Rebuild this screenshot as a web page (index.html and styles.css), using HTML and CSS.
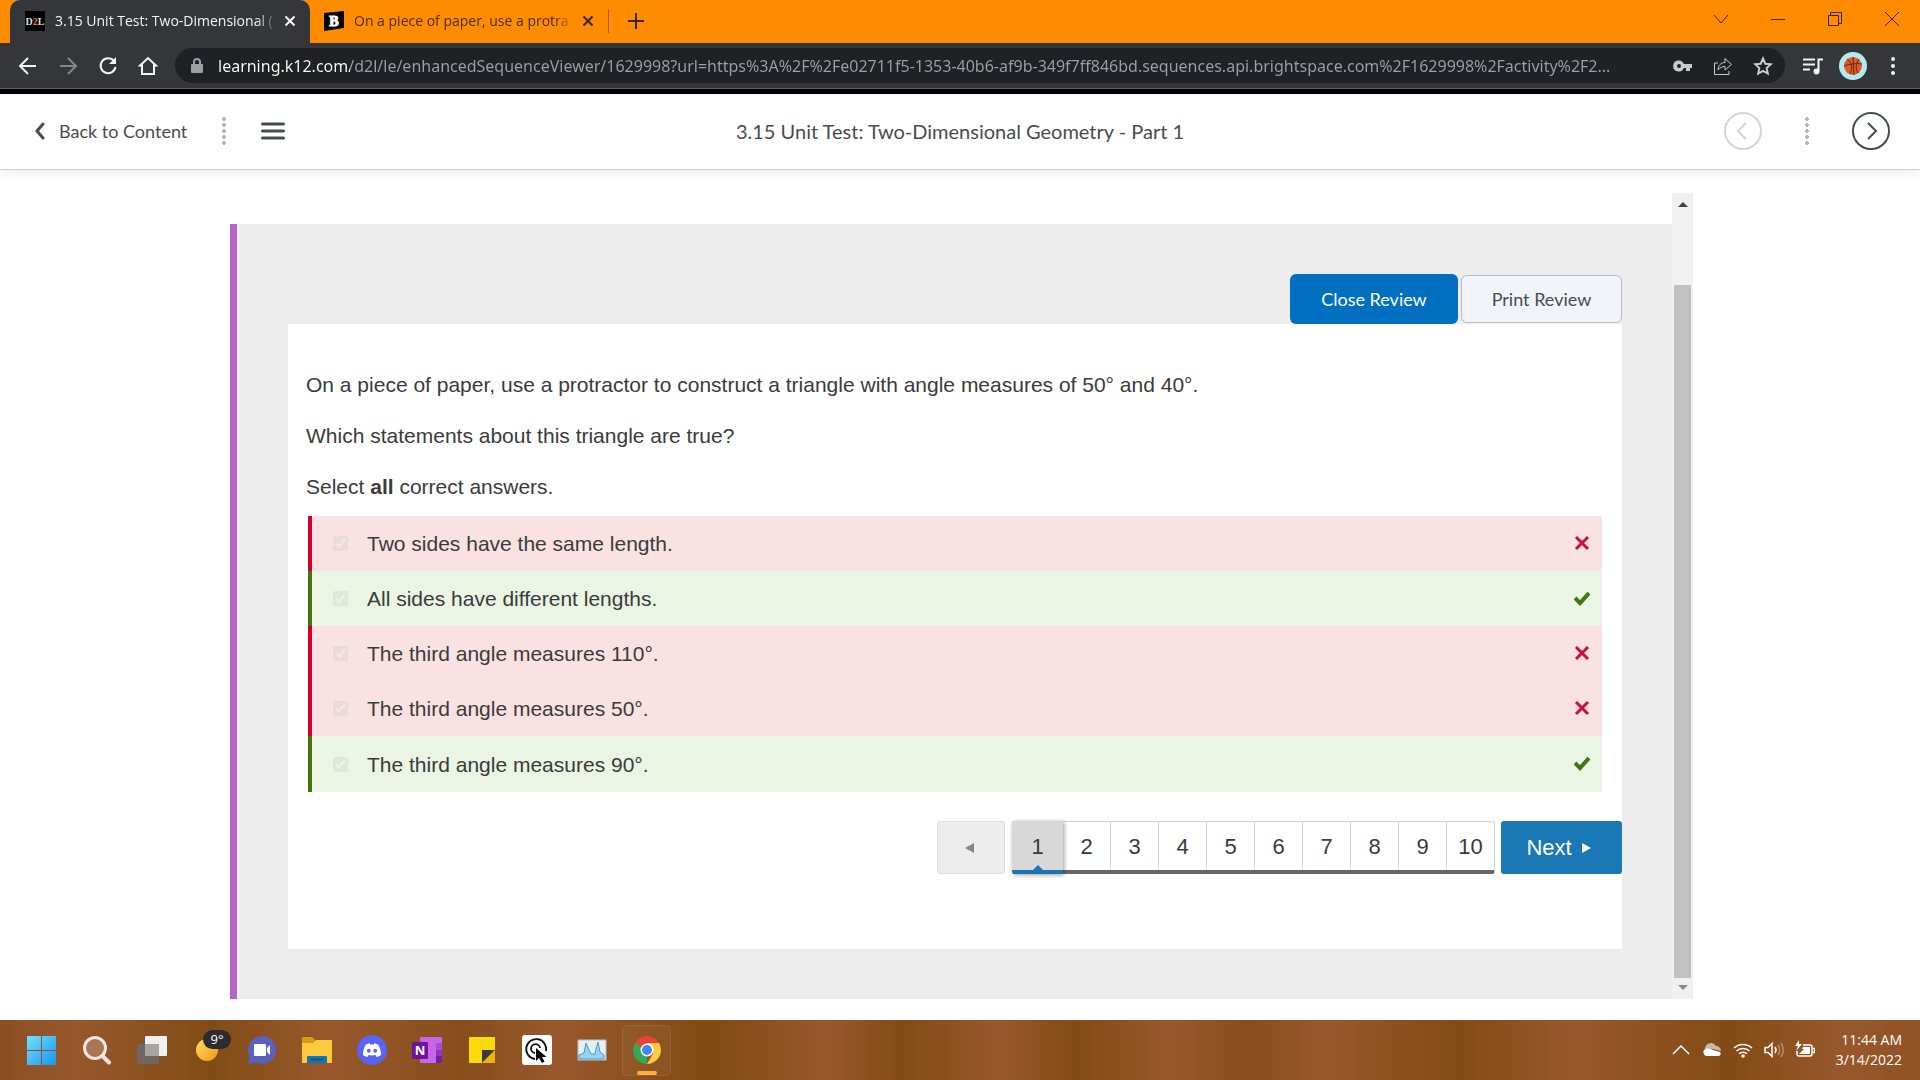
FILE: index.html
```html
<!DOCTYPE html>
<html lang="en">
<head>
    <meta charset="UTF-8">
    <title>3.15 Unit Test: Two-Dimensional Geometry - Part 1</title>
    <link rel="stylesheet" href="styles.css">
</head>
<body>
<div id="tabs">
    <div class="tab active">
        <svg class="favicon" viewBox="0 0 20 20"><rect width="20" height="20" fill="#000"/><text x="10" y="14" text-anchor="middle" font-family="Liberation Serif, serif" font-weight="bold" font-size="10" fill="#ddd">D<tspan fill="#e08050">2</tspan>L</text></svg>
        <span class="tab-title">3.15 Unit Test: Two-Dimensional (</span>
        <button class="tab-close" aria-label="Close tab"><svg viewBox="0 0 12 12"><path d="M1.500 1.500l9 9M10.500 1.500l-9 9"/></svg></button>
    </div>
    <div class="tab">
        <svg class="favicon" viewBox="0 0 20 20"><path d="M0 2L20 0V17L0 20z" fill="#000"/><text x="10" y="15" text-anchor="middle" font-family="Liberation Serif, serif" font-weight="bold" font-size="14" fill="#fff" stroke="#fff">B</text></svg>
        <span class="tab-title">On a piece of paper, use a protra</span>
        <button class="tab-close" aria-label="Close tab"><svg viewBox="0 0 12 12"><path d="M1.500 1.500l9 9M10.500 1.500l-9 9"/></svg></button>
    </div>
    <button class="new-tab" aria-label="New tab"><svg viewBox="0 0 16 16"><path d="M8 0v16M0 8h16"/></svg></button>
    <div class="window-buttons">
        <button aria-label="Search tabs"><svg viewBox="0 0 14 14"><path d="M0 3l7 8 7-8"/></svg></button>
        <button aria-label="Minimize"><svg viewBox="0 0 14 14"><path d="M0 7.500h14"/></svg></button>
        <button aria-label="Restore"><svg viewBox="0 0 14 14"><path d="M.5 3.500h10v10H.5zM2.500 3V.5h11v11H11"/></svg></button>
        <button aria-label="Close"><svg viewBox="0 0 14 14"><path d="M0 0l14 14M14 0L0 14"/></svg></button>
    </div>
</div>

<div id="toolbar">
    <button aria-label="Back"><svg viewBox="0 0 20 20"><path d="M18 10H3M10 2l-8 8 8 8"/></svg></button>
    <button class="off" aria-label="Forward" disabled><svg viewBox="0 0 20 20"><path d="M2 10h15M10 2l8 8-8 8"/></svg></button>
    <button aria-label="Reload"><svg viewBox="0 0 20 20"><path d="M16 5A7.500 7.500 0 1 0 17.500 11"/><path d="M18 1v7h-7z" fill="#f1f3f4" stroke="none"/></svg></button>
    <button aria-label="Home"><svg viewBox="0 0 20 20"><path d="M4 18V9.500H2L10 2l8 7.500h-2V18z"/></svg></button>
    <div class="omnibox">
        <svg class="lock" viewBox="0 0 12 16"><path d="M3 7V4a3 3 0 0 1 6 0v3" fill="none" stroke="#9aa0a6" stroke-width="2"/><rect y="6" width="12" height="9" rx="1" fill="#9aa0a6"/></svg>
        <input type="text" aria-label="Address" value="learning.k12.com/d2l/le/enhancedSequenceViewer/1629998?url=https%3A%2F%2Fe02711f5-1353-40b6-af9b-349f7ff846bd.sequences.api.brightspace.com%2F1629998%2Factivity%2F2...">
        <button aria-label="Passwords"><svg viewBox="0 0 20 20"><path fill="#c8cacd" stroke="none" fill-rule="evenodd" d="M6 4.500a5.500 5.500 0 1 0 4.800 7.500H13v3h4v-3h2V8h-8.200A5.500 5.500 0 0 0 6 4.500zM6 8a2 2 0 1 1 0 4 2 2 0 0 1 0-4z"/></svg></button>
        <button class="thin" aria-label="Share"><svg viewBox="0 0 20 20"><path d="M5 7H1.500v11.500H16V15M5 14c.5-5 3-7.500 7-7.500V2.500L18.500 8.500 12 14v-3.500c-3 0-5 1-7 3.500z"/></svg></button>
        <button aria-label="Bookmark"><svg viewBox="0 0 20 20"><path d="M10 2.500l2.300 5.200 5.500.6-4.100 3.800 1.100 5.500L10 14.900l-4.800 2.700 1.100-5.500-4.100-3.800 5.500-.6z"/></svg></button>
    </div>
    <button class="media" aria-label="Media"><svg viewBox="0 0 20 20"><path d="M0 3.500h12M0 8.500h12M0 13.500h7M15.500 15V3.500H20"/><circle cx="13.500" cy="15.500" r="3" fill="#f1f3f4" stroke="none"/></svg></button>
    <button class="avatar" aria-label="Profile"><svg viewBox="0 0 28 28"><circle cx="14" cy="14" r="14" fill="#b2ebf2" stroke="none"/><circle cx="14" cy="14" r="9" fill="#e65a22" stroke="none"/><path d="M14 5l1 18M5 14c5-2 13-3 18-2M8 7c5 3 6 9 3 15M20 7c-3 4-4 9-1 14" fill="none" stroke="#5b2a1a" stroke-width="1"/></svg></button>
    <button class="kebab" aria-label="Menu"><svg viewBox="0 0 20 20"><g fill="#f1f3f4" stroke="none"><circle cx="10" cy="3" r="2"/><circle cx="10" cy="10" r="2"/><circle cx="10" cy="17" r="2"/></g></svg></button>
</div>

<header id="viewer-header">
    <div class="side">
        <a class="back" href="#"><svg viewBox="0 0 11 18"><path d="M9 2L3 9l6 7"/></svg>Back to Content</a>
        <span class="dots"></span>
        <button class="burger" aria-label="Contents"><svg viewBox="0 0 24 18"><path d="M1.500 2h21M1.500 9h21M1.500 16h21"/></svg></button>
    </div>
    <h1>3.15 Unit Test: Two-Dimensional Geometry - Part 1</h1>
    <div class="side right">
        <button class="round" aria-label="Previous" disabled><svg viewBox="0 0 38 38"><circle cx="19" cy="19" r="18"/><path d="M22 11l-8 8 8 8"/></svg></button>
        <span class="dots"></span>
        <button class="round" aria-label="Next activity"><svg viewBox="0 0 38 38"><circle cx="19" cy="19" r="18"/><path d="M16 11l8 8-8 8"/></svg></button>
    </div>
</header>

<main>
    <div class="frame">
        <div class="review-buttons">
            <button class="close-review">Close Review</button>
            <button class="print-review">Print Review</button>
        </div>
        <div class="question">
            <div class="prompt">
                <p>On a piece of paper, use a protractor to construct a triangle with angle measures of 50° and 40°.</p>
                <p>Which statements about this triangle are true?</p>
                <p>Select <b>all</b> correct answers.</p>
            </div>
            <ul class="answers">
                <li class="wrong"><input type="checkbox" id="a1" checked disabled><label for="a1">Two sides have the same length.</label><svg viewBox="0 0 16 16"><path d="M2 2l12 12M14 2L2 14"/></svg></li>
                <li class="correct"><input type="checkbox" id="a2" checked disabled><label for="a2">All sides have different lengths.</label><svg viewBox="0 0 16 16"><path d="M1 8l5 5 9-10"/></svg></li>
                <li class="wrong"><input type="checkbox" id="a3" checked disabled><label for="a3">The third angle measures 110°.</label><svg viewBox="0 0 16 16"><path d="M2 2l12 12M14 2L2 14"/></svg></li>
                <li class="wrong"><input type="checkbox" id="a4" checked disabled><label for="a4">The third angle measures 50°.</label><svg viewBox="0 0 16 16"><path d="M2 2l12 12M14 2L2 14"/></svg></li>
                <li class="correct"><input type="checkbox" id="a5" checked disabled><label for="a5">The third angle measures 90°.</label><svg viewBox="0 0 16 16"><path d="M1 8l5 5 9-10"/></svg></li>
            </ul>
            <nav class="pager">
                <button class="prev" aria-label="Previous question" disabled><svg viewBox="0 0 9 10"><path d="M9 0v10L0 5z"/></svg></button>
                <div class="pages">
                    <button class="current">1</button>
                    <button>2</button>
                    <button>3</button>
                    <button>4</button>
                    <button>5</button>
                    <button>6</button>
                    <button>7</button>
                    <button>8</button>
                    <button>9</button>
                    <button>10</button>
                </div>
                <button class="next">Next<svg viewBox="0 0 9 10"><path d="M0 0v10l9-5z"/></svg></button>
            </nav>
        </div>
    </div>
    <div class="scrollbar">
        <svg viewBox="0 0 10 5"><path d="M0 5l5-5 5 5z" fill="#444"/></svg>
        <div class="thumb"></div>
        <svg viewBox="0 0 10 5"><path d="M0 0l5 5 5-5z" fill="#888"/></svg>
    </div>
</main>

<footer id="taskbar">
    <div class="apps">
        <button aria-label="Start"><svg viewBox="0 0 30 30"><defs><linearGradient id="win" x2="1" y2="1"><stop stop-color="#6fe3fc"/><stop offset="1" stop-color="#1a93f0"/></linearGradient></defs><path fill="url(#win)" d="M0 1h14v14H0zM15 1h14v14H15zM0 16h14v14H0zM15 16h14v14H15z"/></svg></button>
        <button aria-label="Search"><svg viewBox="0 0 30 30"><circle cx="13" cy="13" r="10.500" fill="#fff" fill-opacity=".2" stroke="#efe6e0" stroke-width="3"/><path d="M20.500 21l6.500 6.500" stroke="#efe6e0" stroke-width="4" stroke-linecap="round"/></svg></button>
        <button aria-label="Task view"><svg viewBox="0 0 30 30"><rect x="8" y="1" width="22" height="20" rx="1" fill="#f2f0ef"/><rect y="9" width="22" height="20" rx="1" fill="#6a6a6c" fill-opacity=".85"/><path d="M8 9h14v12H8z" fill="#a5a5a5"/></svg></button>
        <button class="weather" aria-label="Weather"><svg viewBox="0 0 40 40"><defs><linearGradient id="sun" x2="1" y2="1"><stop stop-color="#ffdf62"/><stop offset="1" stop-color="#f79412"/></linearGradient></defs><circle cx="13" cy="20" r="11" fill="url(#sun)"/><rect x="9" width="28" height="19" rx="9.500" fill="#2c2c2e"/><text x="23" y="14" text-anchor="middle" font-family="Open Sans, sans-serif" font-size="13" fill="#fff">9°</text></svg></button>
        <button aria-label="Chat"><svg viewBox="0 0 30 30"><path d="M15 1a14 14 0 1 1-6 26.600L1 29l1.500-7.500A14 14 0 0 1 15 1z" fill="#5b5fc0"/><rect x="7" y="9" width="12" height="12" rx="1" fill="#fff"/><path d="M20 13l3-3v10l-3-3z" fill="#fff"/></svg></button>
        <button aria-label="File Explorer"><svg viewBox="0 0 30 30"><path d="M0 3q0-1 1-1h9l3 3v5H0z" fill="#d99b16"/><path d="M0 8h11l3-3h15q1 0 1 1v22H0z" fill="#fccb3d"/><path d="M5 28v-6q0-1 1-1h18q1 0 1 1v6z" fill="#1176b8"/><path d="M9 24.500h12" stroke="#0a4f85" stroke-width="1.500"/></svg></button>
        <button aria-label="Discord"><svg viewBox="0 0 30 30"><circle cx="15" cy="15" r="15" fill="#5865f2"/><path fill="#fff" fill-rule="evenodd" d="M9 9.500l3.500-1.200.8 1.300h3.400l.8-1.300L21 9.500c2 3 3.200 6.500 3 10.500-1.500 1.200-3 1.800-4.300 2l-1.200-1.900c-2.300.6-4.700.6-7 0L10.300 22c-1.300-.2-2.800-.8-4.300-2-.2-4 1-7.500 3-10.500zM11.800 13.700a1.900 2 0 1 0 0 4 1.900 2 0 0 0 0-4zm6.400 0a1.900 2 0 1 0 0 4 1.900 2 0 0 0 0-4z"/></svg></button>
        <button aria-label="OneNote"><svg viewBox="0 0 30 30"><rect x="8" y="2" width="22" height="26" rx="1" fill="#ca64ea"/><path d="M24 8h6v7h-6z" fill="#ae4bd5"/><path d="M24 15h6v6h-6z" fill="#9332bf"/><path d="M24 21h6v7h-6z" fill="#7719aa"/><rect y="7" width="16" height="17" rx="1" fill="#6b14a0"/><text x="8" y="20" text-anchor="middle" font-family="Open Sans, sans-serif" font-weight="bold" font-size="13" fill="#fff">N</text></svg></button>
        <button aria-label="Sticky Notes"><svg viewBox="0 0 30 30"><path d="M2 2h26v13L15 28H2z" fill="#fcd90a"/><path d="M15 15h13L15 28z" fill="#3c3c3c"/><path d="M28 15v13H15z" fill="#f0b400"/></svg></button>
        <button aria-label="Auto Clicker"><svg viewBox="0 0 30 30"><rect width="30" height="30" rx="3" fill="#fff"/><g fill="none" stroke="#111" stroke-width="1.800"><path d="M13 24a10 10 0 1 1 11-8"/><path d="M13 18a4.500 4.500 0 1 1 5-5"/></g><path d="M14 13v13l3-3 3 5 2.500-1.500-2.500-4.500h4.500z" fill="#000"/></svg></button>
        <button aria-label="Resource monitor"><svg viewBox="0 0 30 30"><rect x="1" y="5" width="28" height="20" fill="#e8eef2" stroke="#b8c0c6"/><path d="M2 24v-4l5-2 2-10 3 7 2 4h4l1-5 2-7 2 10 4 3v4z" fill="#9bd2f1" stroke="#3c9ed6"/></svg></button>
        <button class="running" aria-label="Google Chrome"><svg viewBox="0 0 30 30"><path d="M15 15L2.900 8A14 14 0 0 1 27.100 8z" fill="#ea4335"/><path d="M15 15v14A14 14 0 0 1 2.900 8z" fill="#34a853"/><path d="M15 8h12.100a14 14 0 0 1-12.100 21l6-10.500z" fill="#fbcb42"/><circle cx="15" cy="15" r="6.500" fill="#fff"/><circle cx="15" cy="15" r="5" fill="#4285f4"/></svg></button>
    </div>
    <div class="tray">
        <svg viewBox="0 0 20 20"><path d="M2 14l8-8 8 8" fill="none" stroke="#fff" stroke-width="1.500"/></svg>
        <svg viewBox="0 0 20 20"><path d="M3 8a6 6 0 0 1 11-2 5 5 0 0 1 5 5l-8-2-8 4z" fill="#c9b7a8"/><path d="M4 16a4 4 0 0 1-1-7l3-.5 12 3.500a2.500 2.500 0 0 1-1 4z" fill="#fff"/></svg>
        <svg viewBox="0 0 20 20"><g fill="none" stroke="#fff" stroke-width="1.500"><path d="M1 8a13 13 0 0 1 18 0M3.500 11a9.500 9.500 0 0 1 13 0M6 13.700a6 6 0 0 1 8 0"/></g><circle cx="10" cy="16" r="1.800" fill="#fff"/></svg>
        <svg viewBox="0 0 20 20"><g fill="none" stroke="#fff" stroke-width="1.500"><path d="M1 7.500h3L8 3.500v13l-4-4H1zM11 7q2 3 0 6"/><path d="M14 5q3.500 5 0 10M17 3q4.500 7 0 14" stroke-opacity=".35"/></g></svg>
        <svg viewBox="0 0 20 20"><path d="M8 5h7q2 0 2 2v7q0 2-2 2H4q-2 0-2-2v-3M18 8.500h1.500v4H18" fill="none" stroke="#fff" stroke-width="1.500"/><path d="M8 7h7v7H4l5-5H7z" fill="#fff"/><path d="M4 0L0 6h3L1 11l6-7H4z" fill="#fff"/></svg>
        <div class="clock">11:44 AM<br>3/14/2022</div>
    </div>
</footer>
</body>
</html>
```
FILE: styles.css
```css
* {
    margin: 0;
    padding: 0;
    box-sizing: border-box;
}

body {
    min-height: 100vh;
    display: flex;
    flex-direction: column;
    font-family: "Liberation Sans", Arial, sans-serif;
    background: #fff;
}

button {
    border: none;
    background: none;
    font: inherit;
    color: inherit;
    cursor: pointer;
}

svg {
    display: block;
    flex: none;
}

ul {
    list-style: none;
}

/* browser tabs */
#tabs {
    height: 43px;
    display: flex;
    background: #ff8c00;
    padding-left: 10px;
    font-family: "Open Sans", sans-serif;
    font-size: 14px;
}

.tab {
    width: 298px;
    height: 43px;
    display: flex;
    align-items: center;
    padding: 0 8px 2px 14px;
    color: #4a2e08;
}

.tab.active {
    width: 300px;
    padding-left: 15px;
    color: #f1f3f4;
    background: #35363a;
    border-radius: 10px 10px 0 0;
}

.favicon {
    width: 20px;
    height: 20px;
    margin-right: 10px;
}

.tab-title {
    flex: 1;
    overflow: hidden;
    white-space: nowrap;
    -webkit-mask-image: linear-gradient(90deg, #000 90%, transparent);
    mask-image: linear-gradient(90deg, #000 90%, transparent);
}

.tab-close {
    width: 24px;
    height: 24px;
    display: flex;
    align-items: center;
    justify-content: center;
}

.tab-close svg {
    width: 12px;
    height: 12px;
    stroke: #3a2408;
    stroke-width: 2;
}

.active .tab-close svg {
    stroke: #fff;
}

.new-tab {
    height: 24px;
    margin-top: 9px;
    padding: 0 20px 0 19px;
    border-left: 1px solid #a8610c;
}

.new-tab svg {
    width: 16px;
    height: 16px;
    stroke: #3a2408;
    stroke-width: 2;
}

.window-buttons {
    display: flex;
    margin-left: auto;
}

.window-buttons button {
    width: 57px;
    height: 37px;
    display: flex;
    align-items: center;
    justify-content: center;
}

.window-buttons svg {
    width: 14px;
    height: 14px;
    fill: none;
    stroke: #3a2408;
}

/* address bar */
#toolbar {
    height: 51px;
    display: flex;
    align-items: center;
    padding: 0 7px 1px 8px;
    background: #35363a;
    border-bottom: 5px solid #000;
    box-shadow: inset 0 -1px #5f6368;
}

#toolbar button {
    width: 40px;
    height: 36px;
    display: flex;
    align-items: center;
    justify-content: center;
}

#toolbar button svg {
    width: 20px;
    height: 20px;
    fill: none;
    stroke: #f1f3f4;
    stroke-width: 2;
}

#toolbar .off svg {
    stroke: #85868a;
}

.omnibox {
    flex: 1;
    height: 35px;
    display: flex;
    align-items: center;
    padding: 0 2px 0 16px;
    margin: 0 8px 0 7px;
    border-radius: 18px;
    background: #202124;
}

.lock {
    width: 12px;
    height: 16px;
    margin-right: 15px;
}

.omnibox input {
    flex: 1;
    min-width: 0;
    border: none;
    outline: none;
    font-family: "Noto Sans", sans-serif;
    font-size: 16px;
    /* host name is white, the rest of the address grey */
    background: linear-gradient(90deg, #fff 132px, #9aa0a6 132px);
    -webkit-background-clip: text;
    background-clip: text;
    color: transparent;
}

#toolbar .omnibox button svg {
    stroke: #c8cacd;
}

#toolbar .omnibox .thin svg {
    stroke-width: 1;
}

#toolbar .avatar svg {
    width: 28px;
    height: 28px;
}

/* course header */
#viewer-header {
    height: 76px;
    display: flex;
    align-items: center;
    padding: 0 30px 2px;
    border-bottom: 1px solid #d0d2d3;
    box-shadow: 0 2px 12px rgba(0, 0, 0, 0.08);
    font-family: Lato, sans-serif;
    color: #494c4e;
}

#viewer-header h1 {
    font-size: 20px;
    font-weight: normal;
}

.side {
    flex: 1;
    display: flex;
    align-items: center;
}

.side.right {
    justify-content: flex-end;
}

.back {
    display: flex;
    align-items: center;
    gap: 14px;
    padding-left: 4px;
    font-size: 18px;
    color: #494c4e;
    text-decoration: none;
}

.back svg {
    width: 11px;
    height: 18px;
    fill: none;
    stroke: #494c4e;
    stroke-width: 3;
    stroke-linecap: round;
}

.dots {
    width: 4px;
    height: 30px;
    margin: 0 35px;
    background: radial-gradient(circle, #b4b6b8 2px, transparent 2px) 0 0 / 4px 6px;
}

.burger svg {
    width: 24px;
    height: 18px;
    stroke: #494c4e;
    stroke-width: 3;
    stroke-linecap: round;
}

.round svg {
    width: 38px;
    height: 38px;
    fill: none;
    stroke: #494c4e;
    stroke-width: 2;
}

.round:disabled svg {
    stroke: #d3d5d6;
}

.right .dots {
    margin: 0 43px;
}

/* quiz frame */
main {
    flex: 1;
    display: flex;
    padding: 23px 227px 21px 230px;
}

.frame {
    flex: 1;
    margin-top: 31px;
    padding: 50px 50px 0 51px;
    background: #ededed;
    border-left: 7px solid #b467c8;
}

.review-buttons {
    display: flex;
    align-items: center;
    justify-content: flex-end;
    gap: 3px;
    font-family: Lato, sans-serif;
    font-size: 18px;
}

.close-review {
    width: 168px;
    height: 50px;
    border-radius: 6px;
    background: #006fbf;
    color: #fff;
}

.print-review {
    width: 161px;
    height: 48px;
    border: 1px solid #b9bcc2;
    border-radius: 6px;
    background: #f1f4fa;
    color: #494c4e;
}

.question {
    height: 625px;
    background: #fff;
    color: #3b3b3b;
    font-size: 21px;
}

.prompt {
    padding: 47px 18px 16px;
}

.prompt p {
    line-height: 27px;
    margin-bottom: 24px;
}

.prompt p:last-child {
    margin-bottom: 0;
}

.answers {
    margin: 0 20px;
}

.answers li {
    height: 55px;
    display: flex;
    align-items: center;
    padding: 0 12px 0 21px;
}

.answers li:last-child {
    height: 56px;
}

.answers input {
    width: 15px;
    height: 15px;
    margin-right: 19px;
    opacity: 0.35;
}

.answers label {
    flex: 1;
    padding-top: 1px;
}

.answers svg {
    width: 16px;
    height: 16px;
    margin-bottom: 2px;
    fill: none;
    stroke-width: 3;
}

.wrong {
    background: #fae2e2;
    border-left: 4px solid #d3002d;
}

.wrong svg {
    stroke: #c8103c;
}

.correct {
    background: #eaf5e4;
    border-left: 4px solid #46750f;
}

.answers .correct svg {
    stroke: #46750f;
    stroke-width: 4;
}

/* pagination */
.pager {
    display: flex;
    justify-content: flex-end;
    margin-top: 29px;
    font-size: 22px;
}

.pager > button {
    height: 53px;
    display: flex;
    align-items: center;
    justify-content: center;
    border-radius: 3px;
}

.pager svg {
    width: 9px;
    height: 10px;
}

.pager .prev {
    width: 68px;
    padding-right: 4px;
    background: #ededed;
    border: 1px solid #ddd;
}

.prev svg {
    fill: #888;
}

.pages {
    display: flex;
    height: 53px;
    margin: 0 6px 0 7px;
    border: 1px solid #d0d0d0;
    border-bottom: 4px solid #666;
    border-radius: 3px;
}

.pages button {
    width: 48px;
    padding-top: 2px;
    border-left: 1px solid #d0d0d0;
}

.pages .current {
    width: 51px;
    height: 53px;
    margin: -1px 0 0 -1px;
    position: relative;
    background: #d8d8d8;
    border-left: none;
    border-bottom: 4px solid #1a75b0;
    border-radius: 3px 0 0 3px;
    box-shadow: 1px 1px 4px rgba(0, 0, 0, 0.4);
}

.pages .current::after {
    content: "";
    position: absolute;
    left: 50%;
    bottom: 0;
    margin-left: -5px;
    border: 5px solid transparent;
    border-top: none;
    border-bottom-color: #1a75b0;
}

.pages .current + button {
    width: 47px;
    border-left: none;
}

.next {
    width: 121px;
    gap: 10px;
    padding-right: 6px;
    background: #1a78b4;
    color: #fff;
}

.next svg {
    fill: #fff;
}

.scrollbar {
    width: 21px;
    display: flex;
    flex-direction: column;
    align-items: center;
    padding: 9px 0;
    background: #f1f1f1;
}

.scrollbar svg {
    width: 10px;
    height: 5px;
}

.thumb {
    flex: 1;
    width: 17px;
    margin: 78px 0 7px;
    background: #c1c1c1;
}

/* taskbar */
#taskbar {
    height: 60px;
    display: flex;
    justify-content: space-between;
    padding: 0 18px 0 14px;
    background: linear-gradient(90deg, #8b4f24, #98572c 4%, #804c15 11%, #98582c 17%, #874e1c 24%, #98582c 29%, #804a12 37%, #98582c 43%, #824b14 47%, #98582c 52%, #824b14 56%, #98582c 61%, #874e1c 65%, #98582c 69%, #824b14 76%, #98582c 82%, #824b14 90%, #98582c 96%, #8f5224);
}

.apps,
.tray {
    display: flex;
    align-items: center;
}

.apps button {
    width: 55px;
    height: 60px;
    display: flex;
    align-items: center;
    justify-content: center;
}

.apps svg {
    width: 30px;
    height: 30px;
}

.apps .weather {
    justify-content: flex-end;
}

.weather svg {
    width: 40px;
    height: 40px;
}

.apps .running {
    width: 49px;
    height: 51px;
    margin-left: 3px;
    position: relative;
    border: 1px solid rgba(255, 255, 255, 0.08);
    border-radius: 5px;
    background: rgba(255, 255, 255, 0.04);
}

.running::after {
    content: "";
    position: absolute;
    left: 14px;
    bottom: 0;
    width: 20px;
    height: 4px;
    border-radius: 2px;
    background: #fbb040;
}

.tray {
    gap: 11px;
}

.tray svg {
    width: 20px;
    height: 20px;
}

.clock {
    width: 76px;
    font-family: "Open Sans", sans-serif;
    font-size: 14px;
    line-height: 20px;
    text-align: right;
    color: #fff;
}
```
